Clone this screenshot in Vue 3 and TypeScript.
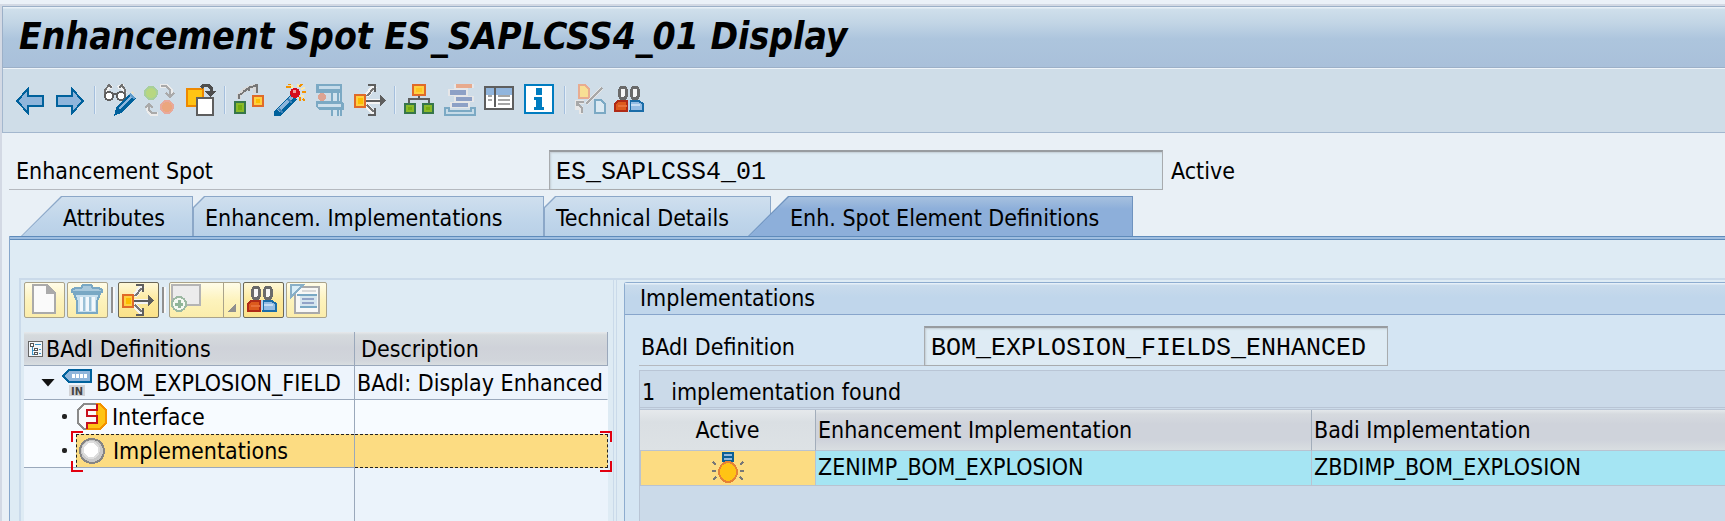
<script setup lang="ts">
import { h, ref } from 'vue'

type Shape = { d: string; f?: string; s?: string; w?: number }

const blue = '#00619c'
const ink = '#5e5e5e'

const square = (x: number, y: number, w: number, hh: number) => `M${x} ${y}h${w}v${hh}h${-w}z`
const disc = (cx: number, cy: number, r: number, ry = r) =>
  `M${cx - r} ${cy}a${r} ${ry} 0 1 0 ${2 * r} 0a${r} ${ry} 0 1 0 ${-2 * r} 0z`

const people: Shape[] = [
  { d: 'M1 27V20L4 17H13V27z', f: '#dc5a1c', s: '#b02a16', w: 2 },
  { d: 'M4 22H13', s: '#e8703a', w: 2 },
  { d: 'M16 27V17H25L29 20V27z', f: '#94bce4', s: '#1a6ca8', w: 2 },
  { d: 'M15 16V26', s: '#b8d2ec', w: 2 },
  { d: 'M17 21H26', s: '#c6dcf2', w: 2 },
  { d: disc(9, 9, 4, 6), f: '#f6f6f6', s: '#6a6a6a', w: 3 },
  { d: disc(21, 9, 4, 6), f: '#f6f6f6', s: '#6a6a6a', w: 3 },
]

const spread: Shape[] = [
  { d: 'M12 12L21 2M12 21L21 30M12 17H26', s: '#f4f4f4', w: 5 },
  { d: 'M13 12L20 4M13 21L20 28', s: '#777', w: 2 },
  { d: 'M12 17H28', s: ink, w: 2 },
  { d: 'M14 1H21V8M14 31H21V24', s: ink, w: 2 },
  { d: 'M26 11L32 17L26 22z', f: ink },
  { d: square(1, 11, 10, 12), f: '#ffd040', s: '#e06a28', w: 2 },
  { d: square(4, 14, 5, 6), f: '#fdbd00' },
]

const icons: Record<string, Shape[]> = {
  back: [{ d: 'M3 17L14 5V12H29V22H14V29z', f: '#8fb5db', s: blue, w: 2 }],
  forward: [{ d: 'M29 17L18 5V12H3V22H18V29z', f: '#8fb5db', s: blue, w: 2 }],
  toggle: [
    { d: 'M1 10L5 2L8 4M21 10L18 2L14 4', s: '#f2f2f2', w: 4 },
    { d: 'M1 10V6L5 1L8 4M21 10V6L18 1L15 4', s: '#707070', w: 2 },
    { d: disc(5, 12, 4), f: '#fff', s: ink, w: 2 },
    { d: disc(17, 12, 4), f: '#fff', s: ink, w: 2 },
    { d: 'M9 10H13', s: ink, w: 2 },
    { d: 'M10 32L12 24L26 9L32 14L17 29z', f: blue },
    { d: 'M15 25L27 13', s: '#8db6dc', w: 2 },
    { d: 'M26 10L31 15', s: '#5d9bcb', w: 2 },
    { d: 'M28 8L30 10', s: '#e5dfcb', w: 2 },
  ],
  activate: [
    { d: disc(7, 9, 7), f: '#a8cf9c' },
    { d: disc(7, 9, 5), f: '#b7d780' },
    { d: disc(23, 23, 7), f: '#e8a99b' },
    { d: disc(23, 23, 5), f: '#eba67e' },
    { d: 'M16 2H23L27 6V11M14 30H7L4 26V21', s: '#ececec', w: 4 },
    { d: 'M17 2H22L26 6V11M22 9L26 13L30 9M13 29H8L5 26V21M1 24L5 20L9 24', s: '#aaa', w: 2 },
  ],
  other: [
    { d: square(3, 5, 16, 17), f: '#ffc414', s: '#ee8900', w: 2 },
    { d: square(13, 14, 16, 17), f: '#fff', s: ink, w: 2 },
    { d: 'M17 4L20 1H24L27 4V9', s: '#4d4d4d', w: 3 },
    { d: 'M21 7H32L26 13z', f: '#4d4d4d' },
  ],
  trace: [
    { d: 'M5 15V11L12 5L21 2V9', s: '#d8d8d8', w: 4 },
    { d: 'M5 15V11L9 9M9 8L15 4V7M15 4L23 1V9', s: '#777', w: 2 },
    { d: square(1, 18, 10, 11), f: '#8aba2a', s: '#36764a', w: 2 },
    { d: square(4, 21, 4, 5), f: '#76ad10' },
    { d: square(19, 12, 10, 10), f: '#ffd040', s: '#e06a28', w: 2 },
    { d: square(22, 15, 4, 4), f: '#fdbd00' },
  ],
  wand: [
    { d: 'M0 32V27L17 10L23 15L6 32z', f: blue },
    { d: 'M4 27L18 13', s: '#8bb4da', w: 3 },
    { d: 'M5 25L9 29M14 15L18 19', s: '#3f82b6', w: 2 },
    { d: disc(21, 9, 5), f: '#d60c1c' },
    { d: square(19, 6, 3, 3), f: '#f29a9a' },
    { d: 'M12 3H18M14 0H17M25 3L28 0M28 8H32M26 13V17M29 15L31 17', s: '#f39200', w: 2 },
    { d: 'M17 1L19 4M24 0V3M27 5L31 4M27 11L30 13', s: '#ffe9a8', w: 2 },
  ],
  clamp: [
    { d: square(2, 0, 26, 9), f: '#7ba9c4' },
    { d: 'M5 3H26', s: '#c5dbea', w: 3 },
    { d: square(17, 8, 11, 24), f: '#7ba9c4' },
    { d: square(19, 9, 7, 23), f: '#d0e2ee' },
    { d: square(23, 9, 2, 23), f: '#7ba9c4' },
    { d: 'M2 17H27L30 20V26H5L2 23z', f: '#7ba9c4' },
    { d: 'M4 21H27', s: '#cfe0ec', w: 3 },
    { d: disc(8, 13, 4), f: '#dda392' },
  ],
  spread,
  hierarchy: [
    { d: 'M15 12V15M5 19V15H25V19', s: ink, w: 2 },
    { d: square(9, 1, 12, 10), f: '#ffd040', s: '#e06a28', w: 2 },
    { d: square(12, 4, 6, 4), f: '#fdc520' },
    { d: square(1, 20, 10, 9), f: '#8aba2a', s: '#36764a', w: 2 },
    { d: square(19, 20, 10, 9), f: '#8aba2a', s: '#36764a', w: 2 },
    { d: square(4, 23, 4, 3), f: '#76ad10' },
    { d: square(22, 23, 4, 3), f: '#76ad10' },
  ],
  stack: [
    { d: 'M10 0H30V4H24V12H30V18H26V24H6V18H10V12H4V5H10z', f: '#e6e6e8' },
    { d: square(12, 0, 16, 4), f: '#e8aa8d' },
    { d: square(6, 6, 16, 5), f: '#8da0c6' },
    { d: square(12, 13, 16, 4), f: '#8da0c6' },
    { d: square(8, 19, 16, 4), f: '#8da0c6' },
    { d: 'M1 24H5V27H27V24H31V31H1z', f: '#c6dbe8', s: '#7ba9c4', w: 2 },
  ],
  layout: [
    { d: square(1, 3, 28, 22), f: '#fff', s: ink, w: 2 },
    { d: square(2, 4, 26, 7), f: '#91b5dd' },
    { d: 'M11 3V23', s: ink, w: 2 },
    { d: 'M4 12H8M4 16H8M14 12H26M14 16H26M14 20H26', s: '#a5a5a5', w: 2 },
  ],
  info: [
    { d: square(1, 1, 28, 28), f: '#fff', s: '#007cc0', w: 2 },
    { d: square(12, 4, 6, 7), f: '#007cc0' },
    { d: 'M10 13H18V23H20V26H10V23H12V16H10z', f: '#007cc0' },
  ],
  compare: [
    { d: 'M5 1H11L15 5V14H5z', f: '#f8df94', s: '#e8ac90', w: 2 },
    { d: 'M21 16H27L31 20V29H21z', f: '#dbe9f2', s: '#7ba9c4', w: 2 },
    { d: 'M28 4L12 20M10 18H3V24H7V30', s: '#e8e8e8', w: 4 },
    { d: 'M28 4L12 20M10 18H3V22M4 20L8 24V29', s: '#a8a8a8', w: 2 },
  ],
  people,
  page: [
    { d: 'M5 1H19L27 9V29H5z', f: '#fafafa', s: '#aaa', w: 2 },
    { d: 'M18 1L27 10H18z', f: '#aaa' },
  ],
  trash: [
    { d: 'M1 8V6L4 4H10L12 1H20L22 4H28L31 6V8z', f: '#a9c9dc', s: '#79a8c4', w: 2 },
    { d: 'M3 10H29L26 17V29H6V17z', f: '#c8e0ee', s: '#79a8c4', w: 2 },
    { d: 'M10 13V27M16 13V27M22 13V27', s: '#f2f8fc', w: 3 },
    { d: 'M13 13V27M19 13V27', s: '#9bc1d7', w: 2 },
  ],
  add: [
    { d: square(1, 1, 28, 20), f: '#ececec', s: '#b4b4b4', w: 2 },
    { d: disc(8, 20, 7), f: '#f4f8f2', s: '#9cb9a2', w: 2 },
    { d: 'M8 16V24M4 20H12', s: '#8fb598', w: 3 },
  ],
  detail: [
    { d: square(5, 3, 24, 26), f: '#f8f8f6', s: '#aaa', w: 2 },
    { d: 'M12 7H26', s: '#d8d8d8', w: 2 },
    { d: 'M1 1H13L1 13z', f: '#d9edf7', s: '#88afc7', w: 2 },
    { d: 'M7 11H27M10 23H27', s: '#79a8c4', w: 2 },
    { d: square(10, 12, 17, 10), f: '#d5e5ee' },
    { d: 'M12 15H24M12 19H24', s: '#91a3c7', w: 2 },
  ],
  iface: [
    { d: 'M8 3H24L30 9V22L24 28H8L2 22V9z', f: '#fafafa', s: '#8a8a8a', w: 2 },
    { d: 'M21 3H24L30 9V22L24 28H11V22H21z', f: '#ffc414', s: '#f39200', w: 2 },
    { d: 'M21 3V9H11V15H21V22H11V28', s: '#c8101c', w: 2 },
  ],
  ring: [
    { d: disc(15, 16, 12), f: '#c9c9c9', s: '#858585', w: 2 },
    { d: disc(14, 15, 8), f: '#fff', s: '#dedede', w: 2 },
  ],
  bulb: [
    { d: square(10, 0, 12, 10), f: '#0b6096' },
    { d: 'M12 3H20M12 7H20', s: '#93b9dc', w: 2 },
    { d: disc(16, 20, 9, 10), f: '#ffc414', s: '#e58236', w: 2 },
    { d: 'M1 10L4 13M0 19H4M1 28L4 25M31 10L28 13M32 19H28M31 28L28 25', s: '#777', w: 2 },
  ],
  outline: [
    { d: square(1, 1, 28, 30), f: '#f2f6fa', s: '#666', w: 2 },
    { d: 'M8 10V26H14M8 18H14', s: '#3a93c5', w: 2 },
    { d: square(5, 5, 6, 5), f: '#fff', s: '#555', w: 2 },
    { d: square(13, 14, 5, 5), f: '#fff', s: '#555', w: 2 },
    { d: square(13, 23, 5, 4), f: '#fff', s: '#555', w: 2 },
    { d: 'M14 7H25M21 16H26M21 25H26', s: '#3a93c5', w: 2 },
  ],
}

const Icon = (props: { name: string }) =>
  h(
    'svg',
    { class: 'icon', viewBox: '0 0 32 32', 'aria-hidden': 'true', 'shape-rendering': 'crispEdges' },
    icons[props.name].map((p) =>
      h('path', { d: p.d, fill: p.f ?? 'none', stroke: p.s ?? 'none', 'stroke-width': p.w ?? 0 }),
    ),
  )
Icon.props = ['name']

const toolbar = [
  ['back', 'Previous object'],
  ['forward', 'Next object'],
  ['|', ''],
  ['toggle', 'Display / Change'],
  ['activate', 'Active / Inactive'],
  ['other', 'Other object'],
  ['|', ''],
  ['trace', 'Check'],
  ['wand', 'Activate'],
  ['clamp', 'Test'],
  ['spread', 'Where-used list'],
  ['|', ''],
  ['hierarchy', 'Display object list'],
  ['stack', 'Display navigation window'],
  ['layout', 'Layout'],
  ['info', 'Help'],
  ['|', ''],
  ['compare', 'Compare'],
  ['people', 'Documentation'],
]

const tabs = ['Attributes', 'Enhancem. Implementations', 'Technical Details', 'Enh. Spot Element Definitions']
const activeTab = ref(3)
const spot = ref('ES_SAPLCSS4_01')
const badi = ref('BOM_EXPLOSION_FIELDS_ENHANCED')
const rows = [{ enh: 'ZENIMP_BOM_EXPLOSION', badi: 'ZBDIMP_BOM_EXPLOSION' }]
</script>

<template>
  <div class="window">
    <header class="title"><h1>Enhancement Spot ES_SAPLCSS4_01 Display</h1></header>

    <div class="toolbar" role="toolbar" aria-label="Application toolbar">
      <template v-for="([name, label], i) in toolbar" :key="i">
        <span v-if="name === '|'" class="sep"></span>
        <button v-else type="button" class="tool" :aria-label="label"><Icon :name="name" /></button>
      </template>
    </div>

    <main class="content">
      <div class="field-row">
        <label class="field-label spot-label" for="spot">Enhancement Spot</label>
        <input id="spot" v-model="spot" class="field spot-field" readonly />
        <span class="status">Active</span>
      </div>

      <div class="tabs" role="tablist">
        <button
          v-for="(t, i) in tabs"
          :key="t"
          type="button"
          role="tab"
          :class="['tab', `tab-${i}`, { active: i === activeTab }]"
          :aria-selected="i === activeTab"
          @click="activeTab = i"
        >
          {{ t }}
        </button>
      </div>

      <section class="sheet">
        <div class="split">
          <div class="left">
            <div class="buttons">
              <button type="button" class="btn" aria-label="Create"><Icon name="page" /></button>
              <button type="button" class="btn" aria-label="Delete"><Icon name="trash" /></button>
              <span class="bsep"></span>
              <button type="button" class="btn on" aria-label="Where-used list"><Icon name="spread" /></button>
              <span class="bsep"></span>
              <button type="button" class="btn menu" aria-label="Add"><Icon name="add" /><span class="drop"></span></button>
              <button type="button" class="btn on" aria-label="Documentation"><Icon name="people" /></button>
              <button type="button" class="btn" aria-label="Details"><Icon name="detail" /></button>
            </div>

            <div class="tree-area">
              <table class="tree">
                <colgroup><col class="c-name" /><col /></colgroup>
                <thead>
                  <tr>
                    <th><div class="cell head"><Icon name="outline" class="small" />BAdI Definitions</div></th>
                    <th class="desc">Description</th>
                  </tr>
                </thead>
                <tbody>
                  <tr class="r-root">
                    <td>
                      <div class="cell root">
                        <button type="button" class="expander" aria-label="Collapse"></button>
                        <svg class="badi-icon" viewBox="0 0 32 32" shape-rendering="crispEdges">
                          <path d="M2 9L8 3H30V15H8z" fill="#8fb5db" stroke="#00619c" stroke-width="2" />
                          <path d="M11 9H26" stroke="#fff" stroke-width="4" stroke-dasharray="3 1" />
                          <path d="M8 18H24V29H8z" fill="#d2d3d7" />
                          <text x="16" y="28" text-anchor="middle" font-size="11" font-weight="bold" fill="#444">IN</text>
                        </svg>
                        <span>BOM_EXPLOSION_FIELD</span>
                      </div>
                    </td>
                    <td>BAdI: Display Enhanced</td>
                  </tr>
                  <tr class="r-leaf">
                    <td><div class="cell leaf"><i class="dot"></i><Icon name="iface" />Interface</div></td>
                    <td></td>
                  </tr>
                  <tr class="r-sel">
                    <td>
                      <div class="cell leaf"><i class="dot"></i><span class="sel-part"><Icon name="ring" />Implementations</span></div>
                    </td>
                    <td class="sel-end"></td>
                  </tr>
                </tbody>
              </table>
              <div class="focus" aria-hidden="true"><i></i><i></i><i></i><i></i></div>
            </div>
          </div>

          <div class="right">
            <h2>Implementations</h2>
            <div class="right-body">
              <div class="field-row badi-row">
                <label class="field-label badi-label" for="badi">BAdI Definition</label>
                <input id="badi" v-model="badi" class="field badi-field" readonly />
              </div>
              <div class="grid-box">
                <p class="found"><span>1</span><span>implementation found</span></p>
                <table class="grid">
                  <colgroup><col class="g-active" /><col class="g-enh" /><col /></colgroup>
                  <thead>
                    <tr><th class="center">Active</th><th>Enhancement Implementation</th><th>Badi Implementation</th></tr>
                  </thead>
                  <tbody>
                    <tr v-for="r in rows" :key="r.enh">
                      <td class="lit"><Icon name="bulb" /></td>
                      <td>{{ r.enh }}</td>
                      <td>{{ r.badi }}</td>
                    </tr>
                  </tbody>
                </table>
              </div>
            </div>
          </div>
        </div>
      </section>
    </main>
  </div>
</template>

<style>
body {
  margin: 0;
  overflow: hidden;
}
</style>

<style scoped>
* {
  box-sizing: border-box;
}
.window {
  display: flex;
  flex-direction: column;
  height: 100vh;
  padding: 4px 0 0 2px;
  background: linear-gradient(#ebf1f8 4px, #d3d9e4 4px);
  color: #000;
  font-family: 'DejaVu Sans Condensed', 'DejaVu Sans', Tahoma, sans-serif;
  font-size: 23px;
  line-height: 28px;
  white-space: nowrap;
}
button,
input {
  padding: 0;
  margin: 0;
  border: 0;
  font: inherit;
  color: inherit;
  background: none;
}
.icon {
  display: block;
  flex: none;
  width: 32px;
  height: 32px;
}
.title {
  flex: none;
  height: 62px;
  margin-top: 2px;
  padding-left: 16px;
  border: 1px solid #9cb0c8;
  border-right: 0;
  background: linear-gradient(#e8f0f7 1px, #cfdfeb 2px, #c2d5e5 16px, #adc5dd 32px, #a9c0da);
}
h1 {
  margin: 0;
  font-size: 37px;
  line-height: 60px;
  font-style: italic;
  font-weight: bold;
}
.toolbar {
  display: flex;
  flex: none;
  align-items: center;
  gap: 8px;
  height: 65px;
  padding-left: 11px;
  border: 1px solid #a3b7ce;
  border-width: 0 0 1px 1px;
  box-shadow: inset 0 1px #eef4f9;
  background: #cfdde8;
}
.tool {
  display: block;
  flex: none;
}
.sep {
  width: 2px;
  height: 28px;
  border-left: 1px solid #a5bfdd;
  background: #e3edf6;
}
.content {
  display: flex;
  flex: 1;
  flex-direction: column;
  min-height: 0;
  padding: 17px 0 0 7px;
  background: #e9f0f6;
}
.field-row {
  display: flex;
  flex: none;
  align-items: stretch;
  height: 40px;
}
.field-label {
  flex: none;
  padding: 7px 0 0 7px;
  border-bottom: 1px solid #b5b9bf;
}
.spot-label {
  width: 540px;
}
.field {
  flex: none;
  height: 40px;
  padding: 3px 6px 0;
  border: 1px solid #a8abae;
  border-top: 2px solid #989ca0;
  box-shadow: inset 1px 1px 2px #c3ccd3;
  background: #deebf4;
  font: 25px/34px 'Liberation Mono', monospace;
}
.spot-field {
  width: 614px;
}
.status {
  padding: 7px 0 0 8px;
}
.tabs {
  display: flex;
  flex: none;
  height: 40px;
  margin: 6px 0 0 12px;
}
.tab {
  --line: #8ba7c8;
  --face: linear-gradient(#cfdfee, #bfd5ea 24px, #b9d0e7);
  --cut: polygon(11px 0, 100% 0, 100% 100%, 0 100%, 0 11px);
  position: relative;
  z-index: 0;
  flex: none;
  padding: 3px 0 0 12px;
  text-align: left;
}
.tab::before,
.tab::after {
  content: '';
  position: absolute;
  z-index: -1;
  inset: 0;
  background: var(--line);
  clip-path: var(--cut);
}
.tab::after {
  inset: 1px 1px 0 1px;
  background: var(--face);
}
.tab-0 {
  --cut: polygon(40px 0, 100% 0, 100% 100%, 0 100%);
  width: 172px;
  padding-left: 42px;
}
.tab-1 {
  width: 351px;
}
.tab-2 {
  width: 227px;
}
.tab-3 {
  --cut: polygon(40px 0, 100% 0, 100% 100%, 0 100%);
  width: 385px;
  margin-left: -23px;
  padding-left: 42px;
}
.tab.active {
  --line: #6f93bf;
  --face: linear-gradient(#a6c0df, #8dafda 12px, #8dafda);
}
.sheet {
  flex: 1;
  min-height: 0;
  border-left: 1px solid #87a7cb;
  background: linear-gradient(#5f8bbb 1px, #9fbee0 1px, #9fbee0 3px, #5f8bbb 3px, #5f8bbb 4px, #deebf4 4px);
  padding: 42px 0 0 9px;
}
.split {
  display: flex;
  height: 100%;
  border: 2px solid #cadaea;
  border-width: 2px 0 0 2px;
}
.left {
  display: flex;
  flex: none;
  flex-direction: column;
  width: 596px;
  padding: 2px 5px 0 3px;
  border-right: 4px double #cadaea;
}
.buttons {
  display: flex;
  flex: none;
  gap: 2px;
  height: 36px;
}
.btn {
  flex: none;
  width: 41px;
  height: 36px;
  padding-left: 3px;
  border: 1px solid #aaa38a;
  border-radius: 2px;
  background: linear-gradient(#fffce8, #fdf3bd 50%, #fbedab);
}
.btn.on {
  border-color: #6b6757;
  background: linear-gradient(#fff8d8, #fce99c 50%, #fbe28a);
}
.btn.menu {
  position: relative;
  width: 72px;
  padding-left: 1px;
}
.drop {
  position: absolute;
  inset: 0 0 0 auto;
  width: 17px;
  border-left: 1px solid #aaa38a;
}
.drop::after {
  content: '';
  position: absolute;
  right: 4px;
  bottom: 5px;
  width: 8px;
  height: 8px;
  background: linear-gradient(135deg, transparent 50%, #8f8f8f 50%);
}
.bsep {
  width: 4px;
  height: 26px;
  margin: 5px 1px 0;
  border-left: 2px solid #909090;
  background: #f8f8f8;
}
.tree-area {
  position: relative;
  flex: 1;
  margin-top: 14px;
  background: linear-gradient(90deg, transparent 330px, #9aa8bb 330px, #9aa8bb 331px, transparent 331px) #ebf3fb;
}
.tree {
  width: 100%;
  border-collapse: separate;
  border-spacing: 0;
  table-layout: fixed;
}
.c-name {
  width: 331px;
}
.tree th,
.tree td {
  height: 34px;
  padding: 0 0 0 2px;
  border-right: 1px solid #9aa8bb;
  border-bottom: 1px solid #9aa8bb;
  overflow: hidden;
  text-align: left;
  font-weight: normal;
}
.tree th {
  background: linear-gradient(#e6e9ec, #d5dadd 3px, #cfd2d9 16px, #d1d5db 28px, #d8dde0);
}
.tree th.desc {
  padding-left: 6px;
}
.tree th:first-child,
.tree td:first-child {
  padding: 0;
}
.tree td:last-child {
  border-right-color: transparent;
}
.cell {
  display: flex;
  align-items: center;
  height: 33px;
}
.head {
  padding-left: 4px;
}
.small {
  width: 16px;
  height: 16px;
  margin-right: 2px;
}
.r-root td {
  background: #edf4fc;
}
.r-leaf td {
  border-bottom-color: #f7fbff;
  background: #f7fbff;
}
.root {
  padding-left: 17px;
}
.expander {
  flex: none;
  width: 14px;
  height: 8px;
  margin-right: 6px;
  background: #111;
  clip-path: polygon(0 0, 100% 0, 50% 100%);
}
.badi-icon {
  flex: none;
  width: 32px;
  height: 32px;
  margin-right: 3px;
}
.leaf {
  padding-left: 38px;
}
.leaf .icon {
  margin-right: 4px;
}
.dot {
  flex: none;
  width: 5px;
  height: 5px;
  margin-right: 9px;
  border-radius: 2px;
  background: #222;
}
.sel-part {
  display: flex;
  flex: 1;
  align-items: center;
  height: 34px;
  margin-top: 1px;
  border: 1px dashed #222;
  border-right: 0;
  background: #fcdc82;
}
.r-sel td {
  background: #f7fbff;
}
.tree td.sel-end {
  border: 1px dashed #222;
  border-left: 0;
  background: #fcdc82;
}
.focus {
  position: absolute;
  inset: 99px -4px auto 47px;
  height: 41px;
}
.focus i {
  position: absolute;
  width: 12px;
  height: 11px;
  border: 0 solid #e2000f;
}
.focus i:nth-child(1) {
  top: 0;
  left: 0;
  border-width: 2px 0 0 2px;
}
.focus i:nth-child(2) {
  top: 0;
  right: 0;
  border-width: 2px 2px 0 0;
}
.focus i:nth-child(3) {
  bottom: 0;
  left: 0;
  border-width: 0 0 2px 2px;
}
.focus i:nth-child(4) {
  right: 0;
  bottom: 0;
  border-width: 0 2px 2px 0;
}
.right {
  display: flex;
  flex: 1;
  flex-direction: column;
  min-width: 0;
  margin: 2px 0 0 7px;
  border: 1px solid #8daccf;
  border-width: 1px 0 0 1px;
  border-radius: 3px 0 0 0;
  background: #d4e5f3;
}
h2 {
  flex: none;
  height: 32px;
  margin: 0;
  padding: 1px 0 0 15px;
  border-bottom: 1px solid #87a5cb;
  background: linear-gradient(#e5eff8 1px, #c9dbec 2px, #c0d6eb 14px, #c0d6eb);
  font-size: 23px;
  line-height: 28px;
  font-weight: normal;
}
.right-body {
  display: flex;
  flex: 1;
  flex-direction: column;
  min-height: 0;
  padding: 11px 0 0 14px;
}
.badi-label {
  width: 285px;
  padding-left: 2px;
}
.badi-field {
  width: 464px;
}
.grid-box {
  flex: 1;
  margin-top: 4px;
  border: 1px solid #b9c5d5;
  border-width: 1px 0 0 1px;
  background: #cbdae9;
}
.found {
  display: flex;
  gap: 16px;
  height: 39px;
  margin: 0;
  padding: 7px 0 0 2px;
  border-bottom: 3px double #b9c5d5;
}
.grid {
  width: 100%;
  border-collapse: separate;
  border-spacing: 0;
  table-layout: fixed;
}
.g-active {
  width: 176px;
}
.g-enh {
  width: 496px;
}
.grid th,
.grid td {
  padding: 0 0 0 2px;
  border-right: 1px solid #b9c3d1;
  border-bottom: 1px solid #b9c3d1;
  text-align: left;
  font-weight: normal;
}
.grid th {
  height: 41px;
  border-right-color: #a2adba;
  background: linear-gradient(#e4e8eb, #d6dadf 4px, #cfd3db 14px, #cfd3db 30px, #d9dee1);
}
.grid th:last-child,
.grid td:last-child {
  border-right: 0;
}
.grid th.center {
  padding: 0;
  background: linear-gradient(#e6e9ec, #dadfe3 12px, #dde2e5);
  text-align: center;
}
.grid td {
  height: 35px;
  padding-bottom: 3px;
  background: #a5e5f3;
}
.grid td.lit {
  padding: 0;
  border: 1px solid #b9c3d1;
  border-top: 0;
  background: #fcdc82;
}
.lit .icon {
  margin: 0 auto;
}
</style>
